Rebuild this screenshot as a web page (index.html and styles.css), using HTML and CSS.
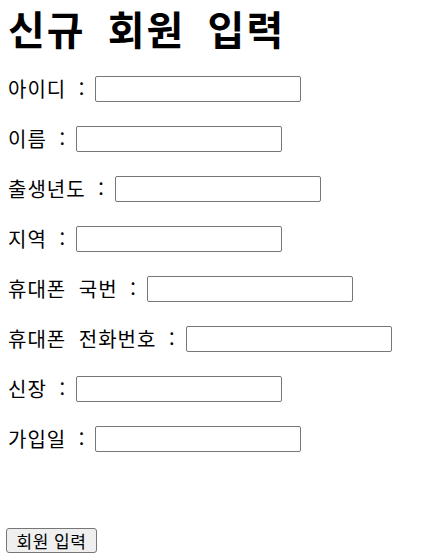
FILE: index.html
```html
<!DOCTYPE html>
<html lang="ko">
<head>
<meta charset="utf-8">
<link rel="stylesheet" href="styles.css">
</head>
<body>
<h1 class="title">신규 회원 입력</h1>
<form class="form">
  <div class="row"><label class="label">아이디 :</label><input class="field" type="text"></div>
  <div class="row"><label class="label">이름 :</label><input class="field" type="text"></div>
  <div class="row"><label class="label">출생년도 :</label><input class="field" type="text"></div>
  <div class="row"><label class="label">지역 :</label><input class="field" type="text"></div>
  <div class="row"><label class="label">휴대폰 국번 :</label><input class="field" type="text"></div>
  <div class="row"><label class="label">휴대폰 전화번호 :</label><input class="field" type="text"></div>
  <div class="row"><label class="label">신장 :</label><input class="field" type="text"></div>
  <div class="row"><label class="label">가입일 :</label><input class="field" type="text"></div>
  <div class="actions"><button class="btn" type="button">회원 입력</button></div>
</form>
</body>
</html>
```
FILE: styles.css
```css
html, body {
  margin: 0;
  padding: 0;
  background: #fff;
}
body {
  padding: 0 8px;
  font-family: "Noto Sans CJK KR", "Noto Sans", sans-serif;
  color: #000;
}
.title {
  margin: 0;
  font-size: 40px;
  line-height: 56px;
  font-weight: 700;
  letter-spacing: 2px;
  word-spacing: 9px;
}
.form {
  display: flex;
  flex-direction: column;
  gap: 24px;
  margin-top: 20px;
}
.row {
  display: flex;
  align-items: center;
  height: 26px;
}
.label {
  font-size: 20px;
  line-height: 26px;
  letter-spacing: 1px;
  word-spacing: 6px;
  margin-right: 10px;
}
.field {
  box-sizing: border-box;
  width: 206px;
  height: 26px;
  border: 1px solid #767676;
  border-radius: 2px;
  padding: 1px 3px;
  margin: 0;
  background: #fff;
  font-size: 16px;
}
.actions {
  margin-top: 52px;
}
.btn {
  box-sizing: border-box;
  margin: 0 0 0 -2px;
  width: 91px;
  height: 25px;
  border: 1px solid #767676;
  border-radius: 3px;
  background: #efefef;
  font-family: "Noto Sans CJK KR", sans-serif;
  font-size: 17px;
  line-height: 21px;
  letter-spacing: 0.5px;
  padding: 0;
  color: #000;
}
```
